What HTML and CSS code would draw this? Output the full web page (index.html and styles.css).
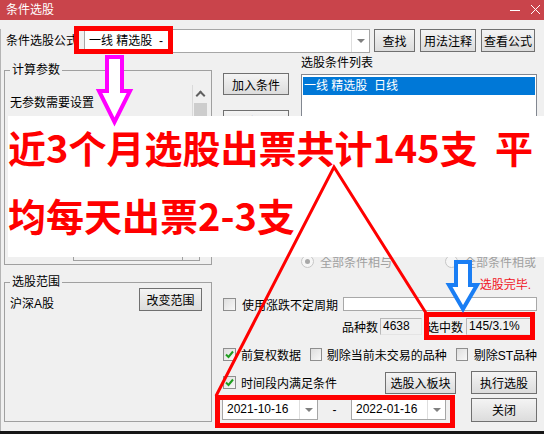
FILE: index.html
```html
<!DOCTYPE html>
<html lang="zh-CN">
<head>
    <meta charset="UTF-8">
    <meta name="viewport" content="width=device-width, initial-scale=1.0">
    <title>条件选股</title>
    <link rel="stylesheet" href="styles.css">
</head>
<body>
<div class="window">
    <!-- title bar -->
    <div class="titlebar">
        <span class="title">条件选股</span>
        <svg class="sys-btns" width="40" height="20" viewBox="0 0 40 20">
            <line x1="6" y1="10.5" x2="16" y2="10.5" stroke="#fff" stroke-width="1"/>
            <line x1="27" y1="5" x2="36" y2="14" stroke="#fff" stroke-width="1"/>
            <line x1="36" y1="5" x2="27" y2="14" stroke="#fff" stroke-width="1"/>
        </svg>
    </div>

    <div class="client">
        <!-- formula row -->
        <div class="formula-row">
            <label class="formula-label">条件选股公式</label>
            <div class="combo formula-combo">
                <span class="value">一线 精选股  -</span>
                <span class="drop"></span>
            </div>
            <button class="btn btn-find">查找</button>
            <button class="btn btn-usage">用法注释</button>
            <button class="btn btn-view">查看公式</button>
        </div>

        <div class="main">
            <!-- left column -->
            <div class="left-col">
                <fieldset class="group params">
                    <legend>计算参数</legend>
                    <div class="param-list">
                        <div class="param-text">无参数需要设置</div>
                        <div class="scrollbar">
                            <div class="scroll-up"></div>
                            <div class="scroll-thumb"></div>
                        </div>
                    </div>
                    <div class="param-edit"><span class="spin"></span></div>
                </fieldset>
                <fieldset class="group scope">
                    <legend>选股范围</legend>
                    <div class="scope-row">
                        <span class="scope-text">沪深A股</span>
                        <button class="btn btn-scope">改变范围</button>
                    </div>
                </fieldset>
            </div>

            <!-- right column -->
            <div class="right-col">
                <div class="cond-area">
                    <div class="cond-buttons">
                        <button class="btn btn-cond">加入条件</button>
                        <button class="btn btn-cond">删除条件</button>
                        <button class="btn btn-cond">引入方案</button>
                        <button class="btn btn-cond">保存方案</button>
                    </div>
                    <div class="cond-list">
                        <div class="list-title">选股条件列表</div>
                        <div class="listbox">
                            <div class="list-item selected">一线 精选股  日线</div>
                        </div>
                    </div>
                </div>

                <div class="radio-row">
                    <span class="radio checked"></span><span class="disabled-text">全部条件相与</span>
                    <span class="radio radio-2"></span><span class="disabled-text">全部条件相或</span>
                </div>

                <div class="status-row">选股完毕.</div>

                <div class="period-row">
                    <span class="cb"></span>
                    <span class="cb-label">使用涨跌不定周期</span>
                    <span class="field period-field"></span>
                </div>

                <div class="count-row">
                    <span>品种数</span>
                    <span class="field count-field">4638</span>
                    <span class="selected-label">选中数</span>
                    <span class="field hit-field">145/3.1%</span>
                </div>

                <div class="check-row">
                    <span class="cb checked"><svg width="11" height="11" viewBox="0 0 11 11"><polyline points="2,5.5 4.5,8 9,2.5" fill="none" stroke="#1f9e1f" stroke-width="2"/></svg></span>
                    <span class="cb-label">前复权数据</span>
                    <span class="cb cb-gap"></span>
                    <span class="cb-label">剔除当前未交易的品种</span>
                    <span class="cb cb-gap"></span>
                    <span class="cb-label">剔除ST品种</span>
                </div>

                <div class="action-row">
                    <span class="cb checked"><svg width="11" height="11" viewBox="0 0 11 11"><polyline points="2,5.5 4.5,8 9,2.5" fill="none" stroke="#1f9e1f" stroke-width="2"/></svg></span>
                    <span class="cb-label">时间段内满足条件</span>
                    <button class="btn btn-block">选股入板块</button>
                    <button class="btn btn-run">执行选股</button>
                </div>

                <div class="date-row">
                    <div class="combo date-combo">
                        <span class="value">2021-10-16</span>
                        <span class="drop"></span>
                    </div>
                    <span class="dash">-</span>
                    <div class="combo date-combo date-end">
                        <span class="value">2022-01-16</span>
                        <span class="drop"></span>
                    </div>
                    <button class="btn btn-close">关闭</button>
                </div>
            </div>
        </div>
    </div>

    <!-- pasted note over the dialog -->
    <div class="notice">
        <div class="notice-text">近3个月选股出票共计145支  平<br>均每天出票2-3支</div>
    </div>

    <!-- hand drawn marks -->
    <svg class="marks" width="544" height="434" viewBox="0 0 544 434">
        <rect x="76.5" y="28.5" width="94" height="23" fill="none" stroke="#ff0000" stroke-width="5"/>
        <rect x="426.5" y="314.5" width="106" height="23" fill="none" stroke="#ff0000" stroke-width="5"/>
        <rect x="217.5" y="397.5" width="235" height="28" fill="none" stroke="#ff0000" stroke-width="5"/>
        <polyline points="216,396 334,167 426,313" fill="none" stroke="#ff0000" stroke-width="3"/>
        <polygon points="107,57 122,57 122,91 130,91 114.5,122 99,91 107,91" fill="#fff" stroke="#ff00ff" stroke-width="4" stroke-linejoin="miter"/>
        <polygon points="456,262 470,262 470,285 477,285 463,309 449,285 456,285" fill="#fff" stroke="#1a7ef4" stroke-width="4"/>
    </svg>
</div>
</body>
</html>
```

FILE: styles.css
```css
*{
    box-sizing: border-box;
}
body{
    margin: 0;
    background-color: #161616;
    font-family: "Liberation Sans", "Noto Sans CJK SC", sans-serif;
    font-size: 12px;
    color: #000;
}
.window{
    position: relative;
    width: 544px;
    height: 431px;
    background-color: #f0f0f0;
    overflow: hidden;
}

/* title bar */
.titlebar{
    display: flex;
    align-items: center;
    height: 20px;
    padding-left: 6px;
    background-color: #c9444b;
    color: #fff;
}
.titlebar .title{
    line-height: 20px;
}
.sys-btns{
    display: block;
    margin-left: auto;
}
.client{
    height: 411px;
    box-shadow: inset 1px 0 #b4b4b4, inset 0 -1px #9c9c9c;
}

/* common controls */
.btn{
    height: 23px;
    padding: 0;
    border: 1px solid #707070;
    background: linear-gradient(#f4f4f4, #dcdcdc);
    font: inherit;
    color: #000;
}
.combo{
    display: flex;
    background-color: #fff;
    border: 1px solid #a6a6a6;
}
.combo .value{
    flex: 1;
    padding-left: 4px;
    white-space: pre;
}
.combo .drop{
    display: flex;
    align-items: center;
    justify-content: center;
    width: 18px;
    border-left: 1px solid #dedede;
}
.combo .drop::after{
    content: "";
    border-left: 4px solid transparent;
    border-right: 4px solid transparent;
    border-top: 4px solid #808080;
}
.cb{
    display: flex;
    align-items: center;
    justify-content: center;
    width: 13px;
    height: 13px;
    border: 1px solid #8e8e8e;
    background: linear-gradient(135deg, #dedede, #f8f8f8);
}
.cb svg{
    display: block;
}
.cb-label{
    margin-left: 5px;
    white-space: nowrap;
}
.field{
    height: 17px;
    line-height: 15px;
    padding-left: 2px;
    border: 1px solid #b8b8b8;
    border-right-color: #e4e4e4;
    border-bottom-color: #e4e4e4;
}

/* formula row */
.formula-row{
    display: flex;
    align-items: flex-start;
    height: 24px;
    margin-top: 9px;
    padding-left: 6px;
}
.formula-label{
    width: 74px;
    line-height: 24px;
}
.formula-combo{
    width: 286px;
    height: 24px;
    margin-left: 4px;
}
.formula-combo .value{
    line-height: 22px;
}
.btn-find{
    width: 41px;
    margin-left: 4px;
}
.btn-usage{
    width: 56px;
    margin-left: 5px;
}
.btn-view{
    width: 54px;
    margin-left: 5px;
}

/* main area */
.main{
    display: flex;
    margin-top: 4px;
    padding-left: 4px;
}
.left-col{
    width: 208px;
    padding-top: 6px;
}
.right-col{
    width: 315px;
    margin-left: 10px;
}
.group{
    margin: 0;
    padding: 0 3px 3px 5px;
    border: 1px solid #a0a0a0;
}
.group legend{
    padding: 0 2px;
    line-height: 14px;
}
.param-list{
    display: flex;
    height: 150px;
    margin-top: 8px;
}
.param-text{
    flex: 1;
    padding-top: 8px;
}
.scrollbar{
    width: 16px;
    border-left: 1px solid #dadada;
}
.scroll-up{
    height: 18px;
    position: relative;
}
.scroll-up::after{
    content: "";
    position: absolute;
    left: 4px;
    top: 7px;
    width: 5px;
    height: 5px;
    border-left: 2px solid #606060;
    border-top: 2px solid #606060;
    transform: rotate(45deg);
}
.scroll-thumb{
    height: 60px;
    margin: 0 1px;
    background-color: #cdcdcd;
}
.param-edit{
    display: flex;
    justify-content: flex-end;
    width: 127px;
    height: 21px;
    margin-top: 5px;
    margin-left: 63px;
    border: 1px solid #a0a0a0;
}
.spin{
    width: 17px;
    border-left: 1px solid #a0a0a0;
}
.scope{
    height: 147px;
    margin-top: 10px;
}
.scope-row{
    display: flex;
    align-items: flex-start;
    margin-top: -1px;
    padding-right: 6px;
}
.scope-text{
    padding-top: 6px;
}
.btn-scope{
    width: 63px;
    margin-left: auto;
}

/* condition list */
.cond-area{
    display: flex;
    height: 197px;
}
.cond-buttons{
    display: flex;
    flex-direction: column;
    gap: 15px;
    width: 67px;
    padding-top: 16px;
    padding-left: 1px;
}
.btn-cond{
    width: 66px;
    height: 22px;
}
.cond-list{
    width: 236px;
    margin-left: 12px;
}
.list-title{
    line-height: 13px;
}
.listbox{
    height: 180px;
    margin-top: 4px;
    padding: 2px 1px;
    background-color: #fff;
    border: 1px solid #828790;
}
.list-item{
    height: 18px;
    line-height: 18px;
    padding-left: 1px;
    white-space: pre;
}
.list-item.selected{
    background-color: #0078d7;
    color: #fff;
}

/* option rows */
.radio-row{
    display: flex;
    align-items: center;
    height: 14px;
}
.radio{
    display: flex;
    align-items: center;
    justify-content: center;
    width: 13px;
    height: 13px;
    margin-left: 79px;
    border: 1px solid #c6c6c6;
    border-radius: 50%;
    background-color: #f6f6f6;
}
.radio.checked::after{
    content: "";
    width: 5px;
    height: 5px;
    border-radius: 50%;
    background-color: #a8a8a8;
}
.radio-2{
    margin-left: 53px;
}
.disabled-text{
    margin-left: 6px;
    color: #a0a0a0;
}
.status-row{
    height: 14px;
    margin-top: 10px;
    padding-right: 6px;
    line-height: 14px;
    text-align: right;
    color: #f0141e;
}
.period-row{
    display: flex;
    align-items: center;
    height: 14px;
    margin-top: 5px;
    padding-left: 1px;
}
.period-row .cb-label{
    margin-left: 6px;
}
.period-field{
    flex: 1;
    height: 14px;
    margin-left: 5px;
    background-color: #fff;
    border-color: #a8a8a8;
}
.count-row{
    display: flex;
    align-items: center;
    height: 17px;
    margin-top: 7px;
    padding-left: 120px;
}
.count-field{
    width: 42px;
    margin-left: 2px;
}
.selected-label{
    margin-left: 5px;
}
.hit-field{
    width: 65px;
    margin-left: 3px;
}
.check-row{
    display: flex;
    align-items: center;
    height: 13px;
    margin-top: 13px;
    padding-left: 1px;
}
.cb-gap{
    margin-left: 9px;
}
.check-row .cb-label:last-child{
    margin-left: 6px;
}
.action-row{
    display: flex;
    align-items: center;
    height: 23px;
    margin-top: 10px;
    padding-left: 1px;
}
.btn-block{
    width: 71px;
    height: 22px;
    margin-left: 48px;
}
.btn-run{
    width: 66px;
    margin-left: 15px;
}
.date-row{
    display: flex;
    align-items: center;
    height: 25px;
    margin-top: 3px;
}
.date-combo{
    width: 96px;
    height: 21px;
}
.date-combo .value{
    line-height: 19px;
}
.dash{
    width: 33px;
    text-align: center;
}
.date-end{
    width: 95px;
}
.btn-close{
    width: 66px;
    height: 24px;
    margin-left: 25px;
}

/* overlay note and marks */
.notice{
    position: absolute;
    left: 8px;
    top: 116px;
    width: 536px;
    height: 141px;
    background-color: #fff;
}
.notice-text{
    margin-top: -3px;
    font-family: "Noto Sans CJK SC", sans-serif;
    font-size: 38px;
    font-weight: 700;
    line-height: 68px;
    color: #ff0000;
    white-space: pre;
}
.marks{
    position: absolute;
    left: 0;
    top: 0;
    pointer-events: none;
}
```
